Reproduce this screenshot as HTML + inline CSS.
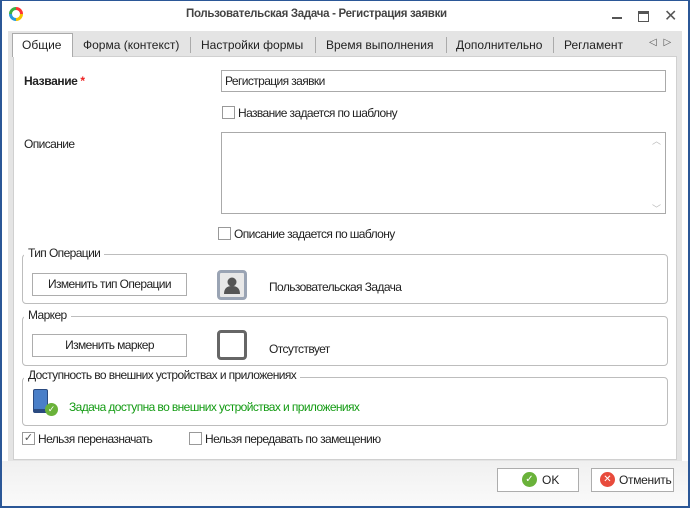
<!DOCTYPE html>
<html><head><meta charset="utf-8"><style>
*{box-sizing:border-box;margin:0;padding:0}
body{width:690px;height:508px;overflow:hidden;background:#fff;font-family:"Liberation Sans",sans-serif;font-size:12px;letter-spacing:-0.6px;color:#222;position:relative}
.a{position:absolute;white-space:nowrap}
.frame{position:absolute;left:0;top:0;width:690px;height:508px;border:2px solid #2b5797;border-top:1px solid #2b5797}
.cb{position:absolute;width:13px;height:13px;border:1px solid #999;background:#fff}
.grp{position:absolute;border:1px solid #bdbdbd;border-radius:4px}
.lg{position:absolute;background:#fff;padding:0 4px}
.btn{position:absolute;border:1px solid #adadad;background:#fff;text-align:center}
.tab{position:absolute;top:38px;font-size:12px;letter-spacing:0;color:#222}
.sep{position:absolute;top:37px;width:1px;height:16px;background:#aaa}
</style></head><body>
<div class="frame"></div>
<svg class="a" style="left:8px;top:6px" width="16" height="16" viewBox="0 0 16 16">
<path d="M8 2.5 A5.5 5.5 0 0 1 13.5 8" fill="none" stroke="#f33" stroke-width="3"/>
<path d="M13.5 8 A5.5 5.5 0 0 1 8 13.5" fill="none" stroke="#f5c400" stroke-width="3"/>
<path d="M8 13.5 A5.5 5.5 0 0 1 2.5 8" fill="none" stroke="#2a9ad8" stroke-width="3"/>
<path d="M2.5 8 A5.5 5.5 0 0 1 8 2.5" fill="none" stroke="#3cb043" stroke-width="3"/>
</svg>
<div class="a" style="left:186px;top:8px;font-weight:bold;font-size:11.5px;color:#444;letter-spacing:-0.3px">Пользовательская Задача - Регистрация заявки</div>
<div class="a" style="left:612px;top:17px;width:10px;height:2px;background:#555"></div>
<div class="a" style="left:638px;top:11px;width:11px;height:11px;border:1px solid #555;border-top:3px solid #555"></div>
<div class="a" style="left:664px;top:6px;font-size:16px;letter-spacing:0;color:#555">✕</div>
<div class="a" style="left:8px;top:31px;width:674px;height:430px;background:#e4e4e4"></div>
<div class="a" style="left:13px;top:56px;width:664px;height:404px;background:#fff;border:1px solid #d0d0d0"></div>
<div class="a" style="left:12px;top:33px;width:61px;height:24px;background:#fff;border:1px solid #aaa;border-bottom:none"></div>
<div class="tab" style="left:22px">Общие</div>
<div class="tab" style="left:83px">Форма (контекст)</div>
<div class="sep" style="left:190px"></div>
<div class="tab" style="left:201px">Настройки формы</div>
<div class="sep" style="left:315px"></div>
<div class="tab" style="left:326px">Время выполнения</div>
<div class="sep" style="left:446px"></div>
<div class="tab" style="left:456px">Дополнительно</div>
<div class="sep" style="left:553px"></div>
<div class="tab" style="left:564px">Регламент</div>
<div class="a" style="left:649px;top:37px;font-size:10px;letter-spacing:2px;color:#555">◁ ▷</div>
<div class="a" style="left:24px;top:74px;font-weight:bold;font-size:12px;letter-spacing:-0.4px">Название <span style="color:#e22">*</span></div>
<div class="a" style="left:221px;top:70px;width:445px;height:22px;border:1px solid #aaa;padding:3px 3px">Регистрация заявки</div>
<div class="cb" style="left:222px;top:106px"></div>
<div class="a" style="left:238px;top:106px">Название задается по шаблону</div>
<div class="a" style="left:24px;top:137px">Описание</div>
<div class="a" style="left:221px;top:132px;width:445px;height:82px;border:1px solid #aaa"></div>
<div class="a" style="left:652px;top:134px;color:#bbb;font-size:9px">︿</div>
<div class="a" style="left:652px;top:202px;color:#bbb;font-size:9px">﹀</div>
<div class="cb" style="left:218px;top:227px"></div>
<div class="a" style="left:234px;top:227px">Описание задается по шаблону</div>

<div class="grp" style="left:22px;top:254px;width:646px;height:50px"></div>
<div class="lg" style="left:24px;top:246px">Тип Операции</div>
<div class="btn" style="left:32px;top:273px;width:155px;height:23px;line-height:21px">Изменить тип Операции</div>
<div class="a" style="left:217px;top:270px;width:30px;height:30px;border:3px solid #9aa4b4;border-radius:4px;background:#e8e8e8"></div>
<svg class="a" style="left:222px;top:275px" width="20" height="20" viewBox="0 0 20 20"><circle cx="10" cy="7" r="4.5" fill="#555"/><path d="M2 19 Q2 11 10 11 Q18 11 18 19Z" fill="#555"/></svg>
<div class="a" style="left:269px;top:280px">Пользовательская Задача</div>

<div class="grp" style="left:22px;top:316px;width:646px;height:50px"></div>
<div class="lg" style="left:24px;top:308px">Маркер</div>
<div class="btn" style="left:32px;top:334px;width:155px;height:23px;line-height:21px">Изменить маркер</div>
<div class="a" style="left:217px;top:330px;width:30px;height:30px;border:3px solid #666;border-radius:4px"></div>
<div class="a" style="left:269px;top:342px">Отсутствует</div>

<div class="grp" style="left:22px;top:377px;width:646px;height:49px"></div>
<div class="lg" style="left:24px;top:368px">Доступность во внешних устройствах и приложениях</div>
<div class="a" style="left:33px;top:389px;width:15px;height:24px;background:#4a7fc8;border-radius:2px;border:1px solid #2a4a80;border-bottom:4px solid #2a4a80"></div>
<div class="a" style="left:45px;top:403px;width:13px;height:13px;border-radius:50%;background:#6ab23a;color:#fff;font-size:9px;letter-spacing:0;text-align:center;line-height:13px">✓</div>
<div class="a" style="left:69px;top:400px;color:#139b13">Задача доступна во внешних устройствах и приложениях</div>

<div class="cb" style="left:22px;top:432px;font-size:11px;letter-spacing:0;line-height:11px;text-align:center;color:#555">✓</div>
<div class="a" style="left:38px;top:432px">Нельзя переназначать</div>
<div class="cb" style="left:189px;top:432px"></div>
<div class="a" style="left:205px;top:432px">Нельзя передавать по замещению</div>

<div class="a" style="left:2px;top:461px;width:686px;height:45px;background:linear-gradient(#f0f0f0,#fafafa)"></div>
<div class="btn" style="left:497px;top:468px;width:82px;height:24px"></div>
<div class="a" style="left:522px;top:472px;width:15px;height:15px;border-radius:50%;background:#6ab23a;color:#fff;font-size:10px;letter-spacing:0;text-align:center;line-height:15px">✓</div>
<div class="a" style="left:542px;top:473px;letter-spacing:0">OK</div>
<div class="btn" style="left:591px;top:468px;width:83px;height:24px"></div>
<div class="a" style="left:600px;top:472px;width:15px;height:15px;border-radius:50%;background:#e84b3c;color:#fff;font-size:10px;letter-spacing:0;text-align:center;line-height:15px">✕</div>
<div class="a" style="left:619px;top:473px;letter-spacing:-0.3px">Отменить</div>
</body></html>
